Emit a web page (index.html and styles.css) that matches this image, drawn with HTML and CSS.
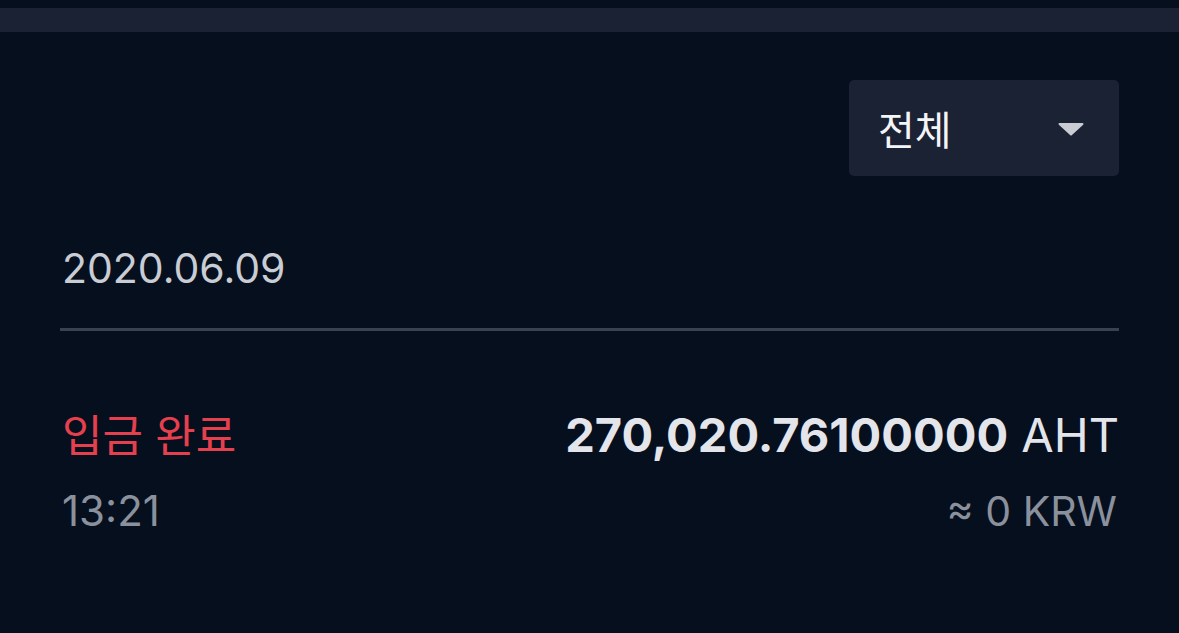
FILE: index.html
```html
<!DOCTYPE html>
<html lang="ko">
<head>
  <meta charset="UTF-8" />
  <meta name="viewport" content="width=device-width, initial-scale=1.0" />
  <title>입출금 내역</title>
  <link rel="stylesheet" href="styles.css">
</head>
<body>
  <div class="top-bar"></div>
  <main class="history">
    <div class="filter-row">
      <div class="filter">
        <span>전체</span>
        <svg class="caret" width="26" height="14" viewBox="0 0 26 14">
          <path d="M1.5 1h23a1 1 0 0 1 .7 1.7L13.7 13.3a1 1 0 0 1-1.4 0L.8 2.7A1 1 0 0 1 1.5 1z" fill="#c9ccd3" />
        </svg>
      </div>
    </div>

    <div class="date">2020.06.09</div>

    <div class="item">
      <div class="item-line">
        <span class="status">입금 완료</span>
        <span class="amount"><b>270,020.76100000</b> AHT</span>
      </div>
      <div class="item-line">
        <span class="time">13:21</span>
        <span class="krw">≈ 0 KRW</span>
      </div>
    </div>
  </main>
</body>
</html>
```

FILE: styles.css
```css
body {
  margin: 0;
  background: #050f1e;
  font-family: "Inter", "Noto Sans CJK KR", sans-serif;
  color: #e3e5ea;
}
.top-bar { margin-top: 8px; height: 24px; background: #1b2233; }
.history { padding: 0 60px 0 60px; }
.filter-row { display: flex; justify-content: flex-end; padding-top: 48px; }
.filter {
  width: 270px; height: 96px; box-sizing: border-box;
  display: flex; align-items: center; justify-content: space-between;
  padding: 0 35px 0 29px;
  background: #1b2233; border-radius: 5px;
  font-size: 40px; color: #f4f5f7;
}
.caret { display: block; margin-top: 2px; }
.date {
  margin-top: 67px; padding: 0 0 35px 2px;
  font-size: 41px; color: #c9ccd3;
  border-bottom: 3px solid #3a414f;
}
.item { display: flex; flex-direction: column; gap: 24px; padding-top: 78px; }
.item-line {
  display: flex; justify-content: space-between; align-items: baseline;
  height: 52px; line-height: 52px;
}
.status { font-size: 44px; color: #e5404e; padding-left: 2px; }
.time { font-size: 42px; color: #8b919c; padding-left: 2px; }
.amount { font-size: 47px; color: #e3e5ea; }
.amount b { font-weight: 700; }
.krw { font-size: 41px; color: #8b919c; padding-right: 2px; }
```
